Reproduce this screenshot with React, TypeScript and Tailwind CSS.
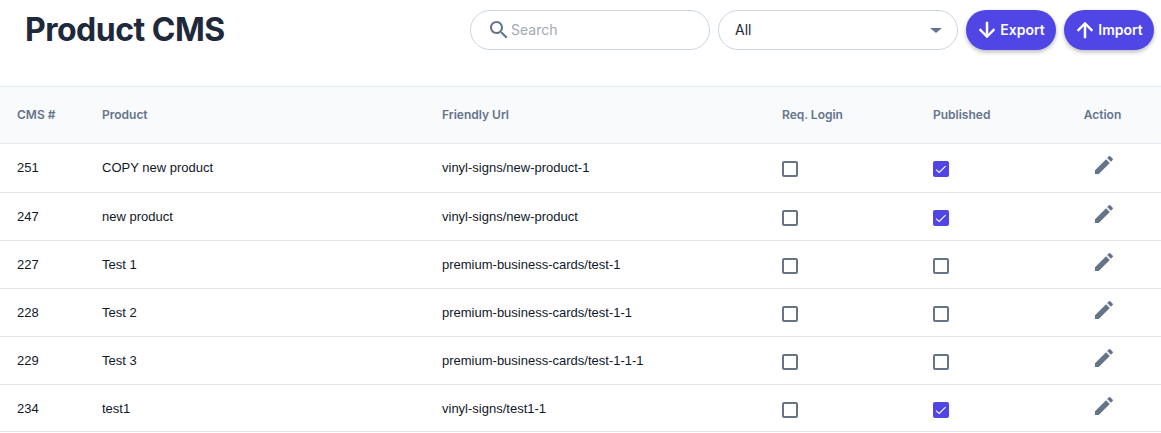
const PENCIL = "M3 17.25V21h3.75L17.81 9.94l-3.75-3.75L3 17.25zM20.71 7.04c.39-.39.39-1.02 0-1.41l-2.34-2.34a.9959.9959 0 0 0-1.41 0l-1.83 1.83 3.75 3.75 1.83-1.83z";
const SEARCH = "M15.5 14h-.79l-.28-.27C15.41 12.59 16 11.11 16 9.5 16 5.91 13.09 3 9.5 3S3 5.91 3 9.5 5.91 16 9.5 16c1.61 0 3.09-.59 4.23-1.57l.27.28v.79l5 4.99L20.49 19l-4.99-5zm-6 0C7.01 14 5 11.99 5 9.5S7.01 5 9.5 5 14 7.01 14 9.5 11.99 14 9.5 14z";
const DOWN = "M20 12l-1.41-1.41L13 16.17V4h-2v12.17l-5.58-5.59L4 12l8 8 8-8z";
const UP = "M4 12l1.41 1.41L11 7.83V20h2V7.83l5.58 5.59L20 12l-8-8-8 8z";

const rows = [
  { id: "251", name: "COPY new product", url: "vinyl-signs/new-product-1", pub: true, h: "h-[49px]" },
  { id: "247", name: "new product", url: "vinyl-signs/new-product", pub: true, h: "h-[48px]" },
  { id: "227", name: "Test 1", url: "premium-business-cards/test-1", pub: false, h: "h-[48px]" },
  { id: "228", name: "Test 2", url: "premium-business-cards/test-1-1", pub: false, h: "h-[48px]" },
  { id: "229", name: "Test 3", url: "premium-business-cards/test-1-1-1", pub: false, h: "h-[48px]" },
  { id: "234", name: "test1", url: "vinyl-signs/test1-1", pub: true, h: "h-[47px] [&>td]:pt-[2px]" },
];

function Icon({ d, className }: { d: string; className: string }) {
  return (
    <svg viewBox="0 0 24 24" className={className} fill="currentColor" aria-hidden="true">
      <path d={d} />
    </svg>
  );
}

function Box({ checked }: { checked: boolean }) {
  return checked ? (
    <span className="mt-[2px] flex h-4 w-4 items-center justify-center rounded-[2px] bg-[#4f46e5]">
      <svg viewBox="0 0 16 16" className="h-4 w-4" fill="none" stroke="#fff" strokeWidth="1.1">
        <path d="M3 8.6l3.2 2.8L12.6 5.2" />
      </svg>
    </span>
  ) : (
    <span className="mt-[2px] block h-4 w-4 rounded-[2px] border-2 border-[#64748b] bg-white" />
  );
}

function ActionButton({ icon, label, width }: { icon: string; label: string; width: string }) {
  return (
    <button className={`flex h-10 ${width} items-center justify-center rounded-full bg-[#4f46e5] text-sm font-semibold text-white shadow-[0_2px_4px_rgba(15,23,42,0.3)]`}>
      <Icon d={icon} className="-mx-[2px] h-6 w-6 stroke-white stroke-[0.5]" />
      <span className="ml-[3px]">{label}</span>
    </button>
  );
}

export default function App() {
  return (
    <div className="h-[433px] w-[1161px] overflow-hidden bg-white font-['Liberation_Sans',sans-serif] text-[13px] text-[#111827]">
      <header className="flex h-[86px] items-start justify-between pl-[25px] pr-[7px] font-['Inter',sans-serif]">
        <h1 className="pt-[12px] text-[32px] leading-9 font-bold tracking-[-0.5px] text-[#1e293b]">Product CMS</h1>
        <div className="flex gap-2 pt-[10px]">
          <div className="flex h-10 w-[240px] items-center rounded-full border border-[#cbd5e1] pl-4 text-[#a3aab8]">
            <Icon d={SEARCH} className="h-6 w-6 text-[#64748b]" />
            <span className="text-sm">Search</span>
          </div>
          <div className="flex h-10 w-[240px] items-center justify-between rounded-full border border-[#cbd5e1] pr-[12px] pl-4 text-sm text-[#1e293b]">
            <span>All</span>
            <span className="mr-[3px] h-0 w-0 border-x-[6px] border-t-[5px] border-x-transparent border-t-[#64748b]" />
          </div>
          <ActionButton icon={DOWN} label="Export" width="w-[90px]" />
          <ActionButton icon={UP} label="Import" width="w-[90px]" />
        </div>
      </header>
      <table className="w-full table-fixed border-collapse">
        <thead>
          <tr className="h-[57px] border-y border-[#e2e8f0] bg-[#f8fafc] text-left font-['Inter',sans-serif] text-xs font-semibold text-[#64748b]">
            <th className="w-[85px] pl-[17px] font-semibold">CMS #</th>
            <th className="w-[340px] pl-[17px] font-semibold">Product</th>
            <th className="w-[340px] pl-[17px] font-semibold">Friendly Url</th>
            <th className="w-[151px] pl-[17px] font-semibold">Req. Login</th>
            <th className="w-[150px] pl-[17px] font-semibold">Published</th>
            <th className="pr-[22px] text-center font-semibold">Action</th>
          </tr>
        </thead>
        <tbody>
          {rows.map((r) => (
            <tr key={r.id} className={`${r.h} border-b border-[#e5e7eb]`}>
              <td className="pl-[17px]">{r.id}</td>
              <td className="pl-[17px]">{r.name}</td>
              <td className="pl-[17px]">{r.url}</td>
              <td className="pl-[17px]"><Box checked={false} /></td>
              <td className="pl-[17px]"><Box checked={r.pub} /></td>
              <td className="pr-[20px]">
                <Icon d={PENCIL} className="mx-auto -mt-[6px] h-6 w-6 text-[#64748b]" />
              </td>
            </tr>
          ))}
        </tbody>
      </table>
    </div>
  );
}
